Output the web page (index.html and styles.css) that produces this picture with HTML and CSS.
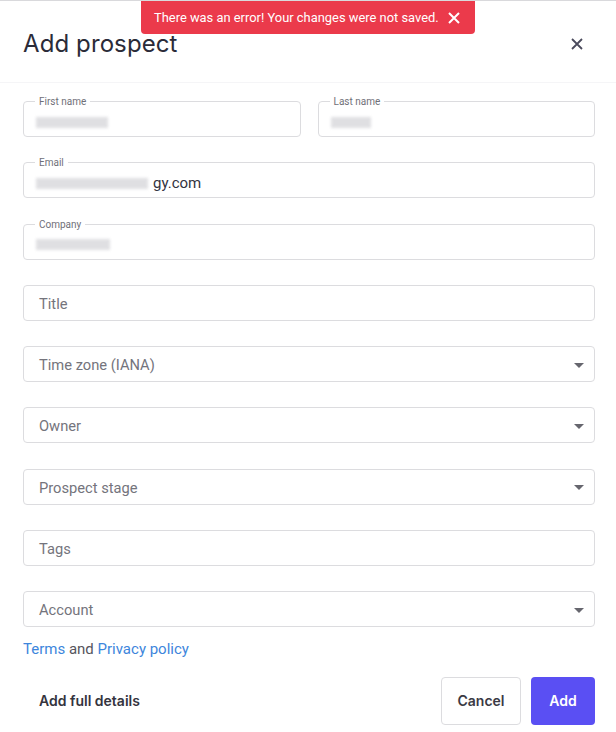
FILE: index.html
```html
<!DOCTYPE html>
<html>
<head>
<meta charset="utf-8">
<link rel="stylesheet" href="styles.css">
</head>
<body>
<div class="toast">
  <span>There was an error! Your changes were not saved.</span>
  <svg class="toast-x" width="12" height="12" viewBox="0 0 12 12"><path d="M1 1L11 11M11 1L1 11" stroke="#fff" stroke-width="2" fill="none"/></svg>
</div>
<div class="modal">
  <header class="header">
    <h1 class="title">Add prospect</h1>
    <svg class="close" width="12" height="12" viewBox="0 0 12 12"><path d="M1 1L11 11M11 1L1 11" stroke="#4a4a5c" stroke-width="1.8" fill="none"/></svg>
  </header>
  <main class="form">
    <div class="row">
      <div class="field filled"><span class="label">First name</span><span class="blur w72"></span></div>
      <div class="field filled"><span class="label">Last name</span><span class="blur w44"></span></div>
    </div>
    <div class="field filled"><span class="label">Email</span><span class="blur w112"></span><span class="value">gy.com</span></div>
    <div class="field filled"><span class="label">Company</span><span class="blur w74"></span></div>
    <div class="field"><span class="ph">Title</span></div>
    <div class="field"><span class="ph">Time zone (IANA)</span><span class="caret"></span></div>
    <div class="field"><span class="ph">Owner</span><span class="caret"></span></div>
    <div class="field"><span class="ph">Prospect stage</span><span class="caret"></span></div>
    <div class="field"><span class="ph">Tags</span></div>
    <div class="field"><span class="ph">Account</span><span class="caret"></span></div>
    <p class="terms"><a class="link">Terms</a> and <a class="link">Privacy policy</a></p>
  </main>
  <footer class="footer">
    <button class="btn text">Add full details</button>
    <div class="actions">
      <button class="btn cancel">Cancel</button>
      <button class="btn add">Add</button>
    </div>
  </footer>
</div>
</body>
</html>
```
FILE: styles.css
```css
* { box-sizing: border-box; }
html, body { margin: 0; padding: 0; }
body {
  width: 616px;
  height: 732px;
  overflow: hidden;
  background: #ffffff;
  font-family: Roboto, "Noto Sans", sans-serif;
  position: relative;
  border-top: 1px solid #d9d9dc;
}
.toast {
  position: absolute;
  left: 141px;
  top: 0;
  width: 334px;
  height: 33px;
  background: #eb3a4b;
  border-radius: 0 0 4px 4px;
  color: #fff;
  font-size: 12.9px;
  display: flex;
  align-items: center;
  padding-left: 13px;
  gap: 9px;
  z-index: 5;
}
.toast-x { flex: none; }
.modal { display: flex; flex-direction: column; }
.header {
  height: 82px;
  display: flex;
  align-items: center;
  justify-content: space-between;
  padding: 4px 33px 0 23px;
  border-bottom: 1px solid #f5f5f7;
}
.title {
  margin: 0;
  font-family: Inter, "Noto Sans", sans-serif;
  font-weight: 400;
  font-size: 24px;
  color: #2b2b38;
  letter-spacing: 0.1px;
}
.form {
  padding: 18px 21px 0 23px;
  display: flex;
  flex-direction: column;
  gap: 25.3px;
}
.row { display: grid; grid-template-columns: 1fr 1fr; gap: 17px; }
.field {
  position: relative;
  height: 36px;
  border: 1px solid #dcdcdf;
  border-radius: 4px;
  display: flex;
  align-items: center;
  padding: 2px 15px 0;
}
.field.filled { padding: 6px 12px 0 12px; }
.label {
  position: absolute;
  top: -6px;
  left: 11px;
  background: #fff;
  padding: 0 4px;
  font-size: 10px;
  line-height: 11px;
  color: #707078;
}
.blur {
  display: inline-block;
  height: 11px;
  background: #d8d8dc;
  filter: blur(1.5px);
  opacity: 0.8;
}
.w72 { width: 72px; }
.w44 { width: 40px; }
.w112 { width: 112px; }
.w74 { width: 74px; }
.value { font-size: 15px; color: #333340; margin-left: 5px; }
.ph { font-size: 14.7px; color: #74747c; }
.caret {
  margin-left: auto;
  margin-right: -5px;
  width: 0;
  height: 0;
  border-left: 5px solid transparent;
  border-right: 5px solid transparent;
  border-top: 5px solid #66666e;
}
.terms {
  margin: -14px 0 0;
  font-size: 15px;
  line-height: 20px;
  color: #55555d;
}
.link { color: #3d86dc; text-decoration: none; }
.footer {
  margin-top: 18px;
  padding: 0 21px 8px 23px;
  display: flex;
  align-items: center;
  justify-content: space-between;
}
.actions { display: flex; gap: 10px; }
.btn {
  font-family: Inter, "Noto Sans", sans-serif;
  font-size: 14px;
  font-weight: 600;
  border-radius: 4px;
  height: 48px;
  border: none;
  background: none;
  cursor: pointer;
}
.btn.text { color: #34343e; padding: 0 16px; }
.btn.cancel { width: 80px; border: 1px solid #dcdcdf; background: #fff; color: #3a3a44; }
.btn.add { width: 64px; background: #5a4ff3; color: #fff; }
```
